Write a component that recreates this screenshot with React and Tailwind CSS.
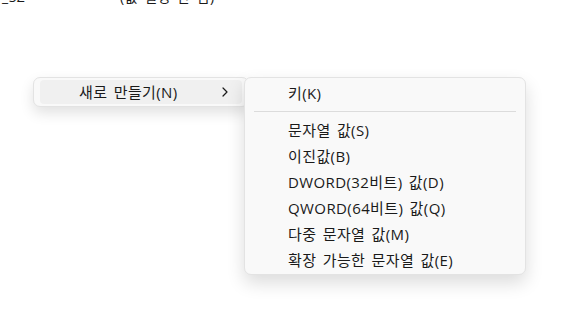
import React from "react";

const subItems = [
  "문자열 값(S)",
  "이진값(B)",
  "DWORD(32비트) 값(D)",
  "QWORD(64비트) 값(Q)",
  "다중 문자열 값(M)",
  "확장 가능한 문자열 값(E)",
];

const Chevron = () => (
  <svg width="8" height="10" viewBox="0 0 8 10" fill="none">
    <path d="M2 1l4 4-4 4" stroke="#1a1a1a" strokeWidth="1.2" strokeLinecap="round" strokeLinejoin="round" />
  </svg>
);

export default function App() {
  return (
    <div className="w-[566px] h-[311px] bg-white overflow-hidden font-['Open_Sans','Noto_Sans_CJK_KR',sans-serif] text-[#1a1a1a]">
      {/* cut-off row of the list above */}
      <div className="flex h-[5px] overflow-hidden text-[14px] leading-[16px] tracking-[0.5px] [word-spacing:2px]">
        <span className="-mt-[11px] w-[120px] pl-[2px]">_SZ</span>
        <span className="-mt-[11px]">(값 설정 안 됨)</span>
      </div>

      <div className="mt-[72px] ml-[33px] relative w-[216px]">
        {/* context menu */}
        <div className="rounded-[7px] border border-[#e3e3e3] bg-[#f9f9f9] px-[6px] py-[2px] shadow-[0_6px_14px_rgba(0,0,0,0.12)]">
          <div className="flex h-[24px] items-center rounded-[4px] bg-[#f0f0f0] pl-[39px] pr-[13px] text-[15px] tracking-[0.4px] [word-spacing:2px]">
            <span className="flex-1">새로 만들기(N)</span>
            <Chevron />
          </div>
        </div>

        {/* submenu */}
        <div className="absolute left-[211px] top-0 w-[282px] rounded-[7px] border border-[#e3e3e3] bg-[#f9f9f9] pt-[3px] pb-[1px] shadow-[0_8px_18px_rgba(0,0,0,0.14)] text-[15px] tracking-[0.4px] [word-spacing:2px]">
          <div className="flex h-[24px] items-center pl-[43px]">키(K)</div>
          <div className="flex h-[12px] items-center px-[9px]">
            <div className="h-px w-full bg-[#dcdcdc]" />
          </div>
          {subItems.map((label) => (
            <div key={label} className="flex h-[26px] items-center pl-[43px]">
              {label}
            </div>
          ))}
        </div>
      </div>
    </div>
  );
}
